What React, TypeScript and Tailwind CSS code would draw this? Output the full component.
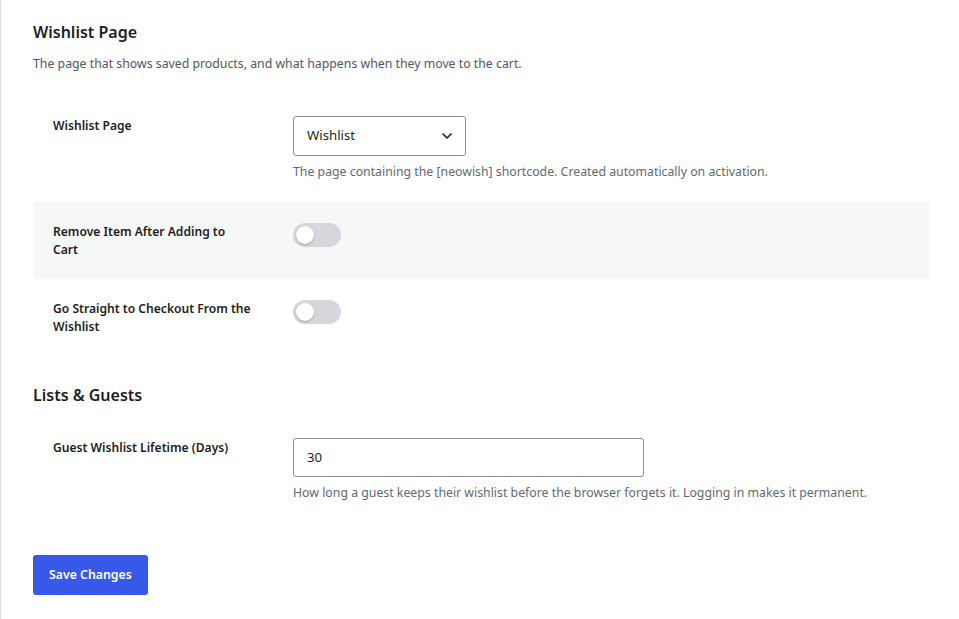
import { ChevronDown } from 'lucide-react';

const font = { fontFamily: '"Noto Sans", "Open Sans", sans-serif' };

function Toggle() {
  return (
    <div className="relative h-6 w-12 rounded-full bg-[#d5d7dd]">
      <span className="absolute left-[3px] top-[3px] h-[18px] w-[18px] rounded-full bg-white shadow-[0_1px_2px_rgba(0,0,0,0.25)]" />
    </div>
  );
}

function Row({
  label,
  children,
  shaded = false,
}: {
  label: string;
  children: React.ReactNode;
  shaded?: boolean;
}) {
  return (
    <div className={`flex py-5 ${shaded ? 'bg-[#f6f7f7]' : ''}`}>
      <div className="w-[260px] shrink-0 pl-5 pr-[41px] pt-px text-[12.1px] font-semibold leading-[18px] text-[#1e1e1e]">
        {label}
      </div>
      <div className="flex-1">{children}</div>
    </div>
  );
}

function Help({ children }: { children: React.ReactNode }) {
  return <p className="mt-[6px] text-[12.3px] leading-5 text-[#646970]">{children}</p>;
}

export default function App() {
  return (
    <div className="min-h-[619px] bg-white" style={font}>
      <div className="min-h-[619px] border-l border-[#dcdcde] pb-6 pl-8 pr-[30px] pt-5">
        <h2 className="text-[16px] font-semibold leading-6 text-[#1e1e1e]">Wishlist Page</h2>
        <p className="mt-[10px] text-[12.3px] leading-5 text-[#50575e]">
          The page that shows saved products, and what happens when they move to the cart.
        </p>

        <div className="mt-[22px]">
          <Row label="Wishlist Page">
            <div className="flex h-10 w-[173px] items-center justify-between rounded-[3px] border border-[#8c8f94] pl-[13px] pr-[10px] text-[13.2px] text-[#1e1e1e]">
              <span>Wishlist</span>
              <ChevronDown className="h-4 w-4" strokeWidth={2.5} />
            </div>
            <Help>The page containing the [neowish] shortcode. Created automatically on activation.</Help>
          </Row>
          <Row label="Remove Item After Adding to Cart" shaded>
            <div className="pt-px">
              <Toggle />
            </div>
          </Row>
          <Row label="Go Straight to Checkout From the Wishlist">
            <div className="pt-px">
              <Toggle />
            </div>
          </Row>
        </div>

        <h2 className="mt-[27px] text-[16px] font-semibold leading-6 text-[#1e1e1e]">Lists &amp; Guests</h2>

        <div className="mt-[11px]">
          <Row label="Guest Wishlist Lifetime (Days)">
            <div className="flex h-[39px] w-[351px] items-center rounded-[3px] border border-[#8c8f94] px-[13px] text-[13.2px] text-[#1e1e1e]">
              30
            </div>
            <Help>How long a guest keeps their wishlist before the browser forgets it. Logging in makes it permanent.</Help>
          </Row>
        </div>

        <button className="mt-[32px] h-10 rounded-[3px] bg-[#3858e9] px-[16px] text-[12.3px] font-semibold text-white">
          Save Changes
        </button>
      </div>
    </div>
  );
}
